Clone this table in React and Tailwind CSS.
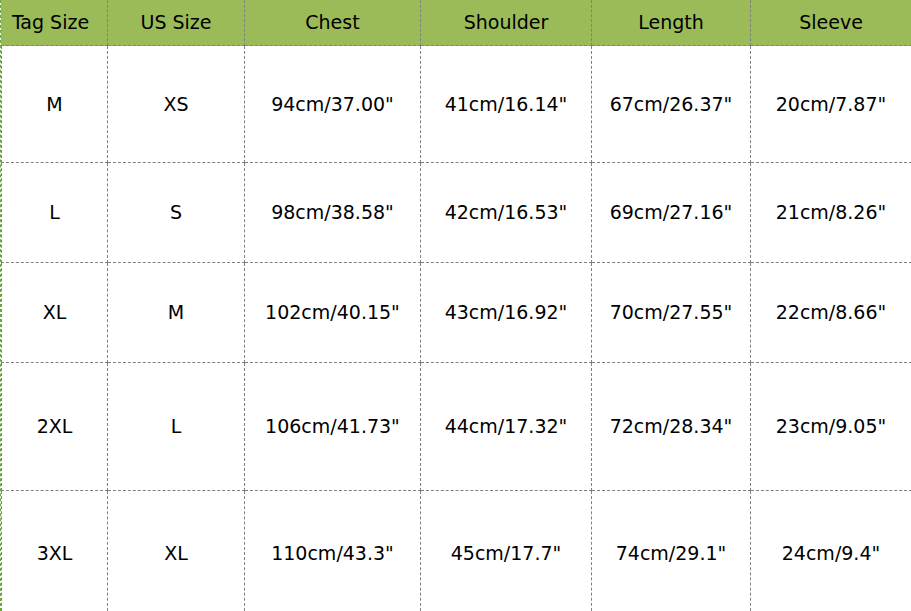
const headers = ["Tag Size", "US Size", "Chest", "Shoulder", "Length", "Sleeve"];

const rows = [
  { h: "h-[117px]", cells: ["M", "XS", "94cm/37.00\"", "41cm/16.14\"", "67cm/26.37\"", "20cm/7.87\""] },
  { h: "h-[100px]", cells: ["L", "S", "98cm/38.58\"", "42cm/16.53\"", "69cm/27.16\"", "21cm/8.26\""] },
  { h: "h-[100px]", cells: ["XL", "M", "102cm/40.15\"", "43cm/16.92\"", "70cm/27.55\"", "22cm/8.66\""] },
  { h: "h-[128px]", cells: ["2XL", "L", "106cm/41.73\"", "44cm/17.32\"", "72cm/28.34\"", "23cm/9.05\""] },
  { h: "h-[125px]", cells: ["3XL", "XL", "110cm/43.3\"", "45cm/17.7\"", "74cm/29.1\"", "24cm/9.4\""] },
];

const widths = ["w-[107px]", "w-[137px]", "w-[176px]", "w-[171px]", "w-[159px]", "w-[161px]"];

function Cell({ children, i, className = "" }) {
  return (
    <div
      className={`${widths[i]} ${i === 0 ? "border-l" : ""} shrink-0 flex items-center justify-center border-r border-b border-dashed border-[#808080] ${className}`}
    >
      {children}
    </div>
  );
}

export default function App() {
  return (
    <div
      className="w-[911px] h-[611px] overflow-hidden bg-white text-black text-[19px] border-l border-dashed border-[#6aaa3a]"
      style={{ fontFamily: '"DejaVu Sans", Verdana, sans-serif' }}
    >
      <div className="w-[1000px]">
        {/* Header */}
        <div className="flex h-[46px] bg-[#9bbb59]">
          {headers.map((t, i) => (
            <Cell key={t} i={i} className={i === 0 ? "border-l-[#9bbb59] pr-2" : ""}>
              {t}
            </Cell>
          ))}
        </div>

        {rows.map((r, ri) => (
          <div key={ri} className={`flex ${r.h}`}>
            {r.cells.map((c, i) => (
              <Cell key={i} i={i}>
                {c}
              </Cell>
            ))}
          </div>
        ))}
      </div>
    </div>
  );
}
